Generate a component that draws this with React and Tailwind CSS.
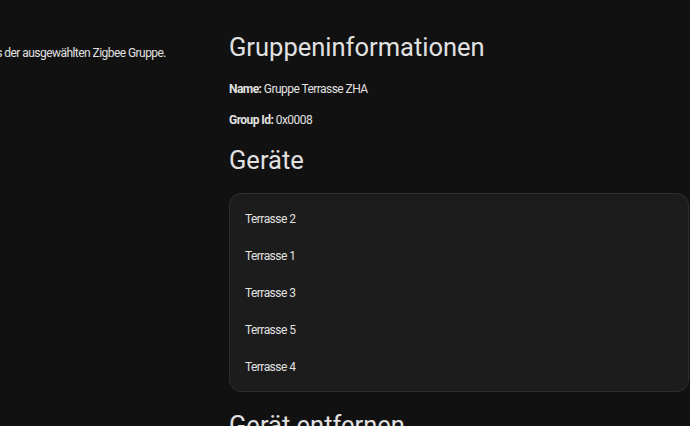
export default function App() {
  const devices = ["Terrasse 2", "Terrasse 1", "Terrasse 3", "Terrasse 5", "Terrasse 4"];

  return (
    <div
      className="w-[690px] h-[426px] overflow-hidden bg-[#111111] text-[#e1e1e1] flex"
      style={{ fontFamily: "Roboto, 'Noto Sans', sans-serif" }}
    >
      {/* Left column: description */}
      <div className="w-[229px] shrink-0 pt-[45px]">
        <p className="-ml-[31px] whitespace-nowrap text-[12px] leading-[16px] tracking-[-0.55px] text-[#e1e1e1]">
          Details der ausgewählten Zigbee Gruppe.
        </p>
      </div>

      {/* Right column: content */}
      <div className="w-[460px] shrink-0 pt-[31px]">
        <h2 className="text-[25.5px] leading-[32px] font-normal">Gruppeninformationen</h2>

        <p className="mt-[18px] text-[12px] leading-[17px] tracking-[-0.55px]">
          <b className="font-bold">Name:</b> Gruppe Terrasse ZHA
        </p>
        <p className="mt-[14px] text-[12px] leading-[17px] tracking-[-0.55px]">
          <b className="font-bold">Group Id:</b> 0x0008
        </p>

        <h2 className="mt-[15px] text-[25.5px] leading-[32px] font-normal">Geräte</h2>

        <div className="mt-[17px] rounded-[12px] border border-[#2e2e2e] bg-[#1c1c1c] py-[6px]">
          {devices.map((d) => (
            <div key={d} className="h-[37px] px-[15px] flex items-center text-[12px] tracking-[-0.55px]">
              {d}
            </div>
          ))}
        </div>

        <h2 className="mt-[17px] text-[25.5px] leading-[32px] font-normal">Gerät entfernen</h2>
      </div>
    </div>
  );
}
